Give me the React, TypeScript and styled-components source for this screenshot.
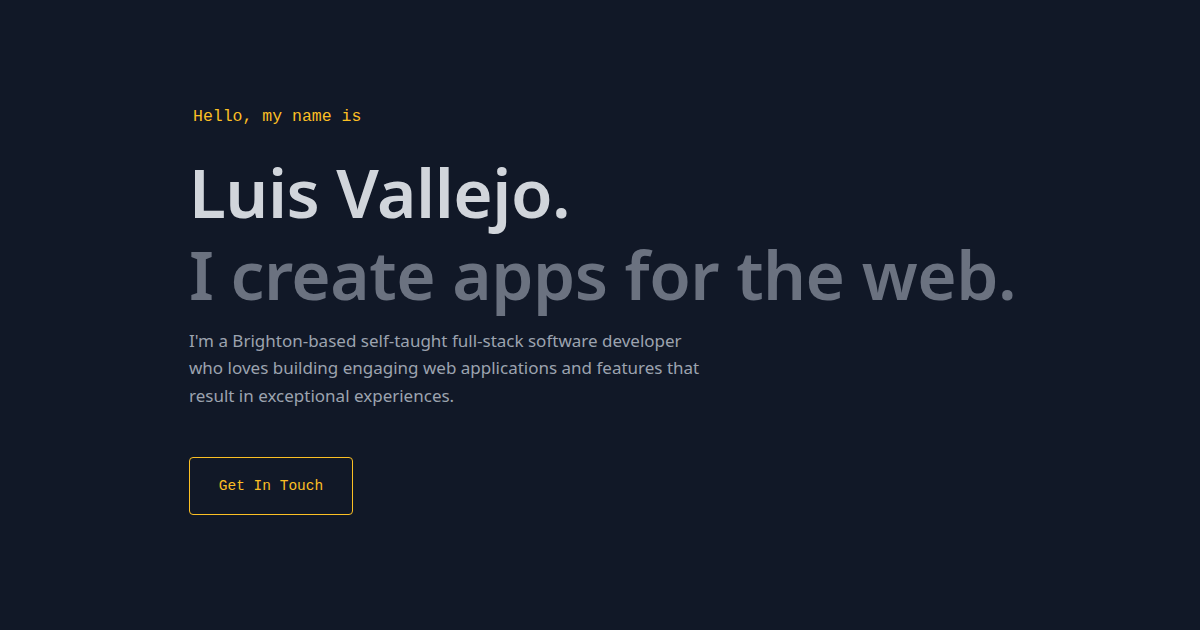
import React from "react";
import styled, { createGlobalStyle } from "styled-components";

const Global = createGlobalStyle`
  html, body { margin: 0; padding: 0; background: #111827; }
  * { box-sizing: border-box; }
`;

const Page = styled.main`
  min-height: 100vh;
  display: flex;
  align-items: center;
  padding: 0 0 8px 189px;
  font-family: "Noto Sans", "Open Sans", sans-serif;
`;

const Hero = styled.section`
  display: flex;
  flex-direction: column;
  align-items: flex-start;
`;

const Greeting = styled.p`
  margin: 0 0 24px 4px;
  font-family: "Liberation Mono", monospace;
  font-size: 16.5px;
  line-height: 20px;
  color: #fbbf24;
`;

const Title = styled.h1<{ $muted?: boolean }>`
  margin: 0;
  font-weight: 600;
  font-size: 67.5px;
  line-height: 82px;
  letter-spacing: -0.5px;
  color: ${(p) => (p.$muted ? "#6b7280" : "#d1d5db")};
`;

const Lead = styled.p`
  margin: 12px 0 0;
  max-width: 516px;
  font-size: 17px;
  line-height: 27.5px;
  color: #9ca3af;
`;

const Button = styled.a`
  margin-top: 48px;
  display: inline-flex;
  align-items: center;
  justify-content: center;
  width: 164px;
  height: 58px;
  border: 1px solid #fbbf24;
  border-radius: 4px;
  font-family: "Liberation Mono", monospace;
  font-size: 14.5px;
  color: #fbbf24;
  text-decoration: none;
`;

export default function App() {
  return (
    <>
      <Global />
      <Page>
        <Hero>
          <Greeting>Hello, my name is</Greeting>
          <Title>Luis Vallejo.</Title>
          <Title as="h2" $muted>I create apps for the web.</Title>
          <Lead>
            I'm a Brighton-based self-taught full-stack software developer who
            loves building engaging web applications and features that result in
            exceptional experiences.
          </Lead>
          <Button href="#contact">Get In Touch</Button>
        </Hero>
      </Page>
    </>
  );
}
